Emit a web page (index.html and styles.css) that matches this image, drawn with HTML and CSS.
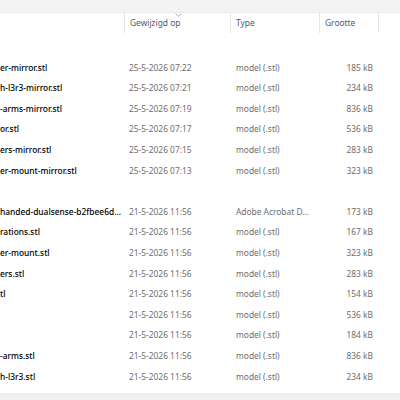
FILE: index.html
```html
<!DOCTYPE html>
<html lang="nl">
<head>
<meta charset="utf-8">
<title>Bestanden</title>
<link rel="stylesheet" href="styles.css">
</head>
<body>
<div class="window">
  <div class="toolbar"></div>
  <div class="list">
    <div class="row header">
      <div class="cell name"></div>
      <div class="cell col sorted">Gewijzigd op
        <svg class="caret" width="7" height="4" viewBox="0 0 7 4"><path d="M0.5 0.5 L3.5 3.2 L6.5 0.5" fill="none" stroke="#9aa0a6" stroke-width="0.9"/></svg>
      </div>
      <div class="cell col">Type</div>
      <div class="cell col">Grootte</div>
      <div class="cell col last"></div>
    </div>

    <div class="group first"></div>
    <div class="row"><div class="cell name">er-mirror.stl</div><div class="cell date">25-5-2026 07:22</div><div class="cell type">model (.stl)</div><div class="cell size">185 kB</div></div>
    <div class="row"><div class="cell name">h-l3r3-mirror.stl</div><div class="cell date">25-5-2026 07:21</div><div class="cell type">model (.stl)</div><div class="cell size">234 kB</div></div>
    <div class="row"><div class="cell name">-arms-mirror.stl</div><div class="cell date">25-5-2026 07:19</div><div class="cell type">model (.stl)</div><div class="cell size">836 kB</div></div>
    <div class="row"><div class="cell name">or.stl</div><div class="cell date">25-5-2026 07:17</div><div class="cell type">model (.stl)</div><div class="cell size">536 kB</div></div>
    <div class="row"><div class="cell name">ers-mirror.stl</div><div class="cell date">25-5-2026 07:15</div><div class="cell type">model (.stl)</div><div class="cell size">283 kB</div></div>
    <div class="row"><div class="cell name">er-mount-mirror.stl</div><div class="cell date">25-5-2026 07:13</div><div class="cell type">model (.stl)</div><div class="cell size">323 kB</div></div>

    <div class="group"></div>
    <div class="row"><div class="cell name">handed-dualsense-b2fbee6d...</div><div class="cell date">21-5-2026 11:56</div><div class="cell type">Adobe Acrobat D...</div><div class="cell size">173 kB</div></div>
    <div class="row"><div class="cell name">rations.stl</div><div class="cell date">21-5-2026 11:56</div><div class="cell type">model (.stl)</div><div class="cell size">167 kB</div></div>
    <div class="row"><div class="cell name">er-mount.stl</div><div class="cell date">21-5-2026 11:56</div><div class="cell type">model (.stl)</div><div class="cell size">323 kB</div></div>
    <div class="row"><div class="cell name">ers.stl</div><div class="cell date">21-5-2026 11:56</div><div class="cell type">model (.stl)</div><div class="cell size">283 kB</div></div>
    <div class="row"><div class="cell name">tl</div><div class="cell date">21-5-2026 11:56</div><div class="cell type">model (.stl)</div><div class="cell size">154 kB</div></div>
    <div class="row"><div class="cell name"></div><div class="cell date">21-5-2026 11:56</div><div class="cell type">model (.stl)</div><div class="cell size">536 kB</div></div>
    <div class="row"><div class="cell name"></div><div class="cell date">21-5-2026 11:56</div><div class="cell type">model (.stl)</div><div class="cell size">184 kB</div></div>
    <div class="row"><div class="cell name">-arms.stl</div><div class="cell date">21-5-2026 11:56</div><div class="cell type">model (.stl)</div><div class="cell size">836 kB</div></div>
    <div class="row"><div class="cell name">h-l3r3.stl</div><div class="cell date">21-5-2026 11:56</div><div class="cell type">model (.stl)</div><div class="cell size">234 kB</div></div>
  </div>
  <div class="statusbar"></div>
</div>
</body>
</html>
```
FILE: styles.css
```css
html, body {
  margin: 0;
  padding: 0;
  background: #ffffff;
}

body {
  font-family: "Noto Sans", "Open Sans", sans-serif;
  font-size: 8.4px;
  overflow: hidden;
}

.window {
  width: 400px;
  height: 400px;
  display: flex;
  flex-direction: column;
}

.toolbar {
  height: 12px;
  flex: none;
  background: #f3f3f3;
  border-bottom: 1px solid #ececec;
}

.list {
  flex: 1;
  display: flex;
  flex-direction: column;
}

.row {
  display: grid;
  grid-template-columns: 124px 106px 89px 59px 22px;
  height: 20.6px;
  align-items: center;
  white-space: nowrap;
}

.cell {
  overflow: hidden;
  line-height: 12px;
}

.header {
  height: 20px;
  align-items: stretch;
}

.header .col {
  position: relative;
  display: flex;
  align-items: center;
  padding-left: 5px;
  color: #4c5a6e;
  border-left: 1px solid #e5e5e5;
}

.header .sorted {
  overflow: visible;
}

.caret {
  position: absolute;
  left: 50px;
  top: 0;
}

.group {
  height: 20.6px;
}

.group.first {
  height: 24.4px;
}

.name {
  color: #000000;
  font-weight: 500;
}

.date {
  color: #6d6d6d;
  padding-left: 5px;
}

.type {
  color: #6d6d6d;
  padding-left: 6px;
}

.size {
  color: #6d6d6d;
  text-align: right;
  padding-right: 5px;
}

.statusbar {
  height: 7px;
  flex: none;
  background: #f0f0f0;
}
```
